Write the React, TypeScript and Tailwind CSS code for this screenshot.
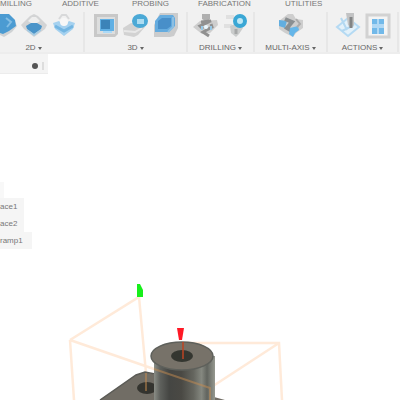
import type { ReactNode } from "react";

const Icon = ({ children }: { children: ReactNode }) => (
  <svg viewBox="0 0 28 28" className="h-7 w-7" aria-hidden="true">
    {children}
  </svg>
);

const AdaptiveIcon = () => (
  <Icon>
    <path d="M1 12 12 2l12 5 3 7-5 6-8 5-12-6z" fill="#cfd2d4" />
    <path d="M1 8 9 2h10l6 6 1 6-7 5-6 3-12-4z" fill="#4b9bd2" />
    <path d="m16 6 5 4-4 5" fill="none" stroke="#82bde4" strokeWidth="2" />
  </Icon>
);

const PocketIcon = () => (
  <Icon>
    <path d="m1 13 9-9 4-2 4 2 9 9-2 4-11 8-10-8z" fill="#d3d4d5" />
    <path d="m8 9 4-4h4l4 4-6 4z" fill="#eeeeee" />
    <path d="m6 14 5-3h6l5 3-1 3-7 5-7-5z" fill="#4a94c9" />
    <path d="m7 18 7 5 7-5" fill="none" stroke="#a3cce6" strokeWidth="1.5" />
  </Icon>
);

const FaceIcon = () => (
  <Icon>
    <path d="m9 7 3-4h4l3 4" fill="none" stroke="#d8d9da" strokeWidth="2" />
    <path d="m3 11 6-2 5 5 5-5 6 2-2 6-9 7-9-7z" fill="#a5d1ef" />
    <path d="m5 14 9 5 9-5" fill="none" stroke="#74b6e2" strokeWidth="3" />
    <circle cx="14" cy="10" r="4" fill="#f7f7f7" />
  </Icon>
);

const ClearingIcon = () => (
  <Icon>
    <path d="M2 2h24v20l-3 3H2z" fill="#c8c8c8" />
    <path d="M5 5h18v17H5z" fill="#dddede" />
    <path d="M8 7h14v12H8z" fill="#61b0e4" />
    <path d="M9 8h9v9H9z" fill="#3b83b8" />
    <path d="M11 19h9v2h-9z" fill="#acdaf7" />
  </Icon>
);

const ParallelIcon = () => (
  <Icon>
    <path d="m1 16 8-5 14 4-7 8-4 2-10-2z" fill="#d2d2d2" />
    <path d="m2 19 11 1 7-4" fill="none" stroke="#e8e8e8" strokeWidth="2" />
    <ellipse cx="18" cy="9" rx="8" ry="7" fill="#4ba9d6" />
    <path d="M15 7h7v5h-7z" fill="#addcf1" />
  </Icon>
);

const ContourIcon = () => (
  <Icon>
    <path d="M8 1h18v15l-4 8-4 1H2V13z" fill="#cbcccd" />
    <path d="m3 9 5-6h13l2 3v8l-6 6H3z" fill="#65acdf" />
    <path d="m6 9 4-3h9v8l-4 3H6z" fill="#488fc9" />
    <path d="M21 5v10l-5 5" fill="none" stroke="#8dbfe2" strokeWidth="2" />
  </Icon>
);

const DrillIcon = () => (
  <Icon>
    <path d="m1 15 7-6 17-1 1 5-8 8-8 1z" fill="#cecece" />
    <path d="M10 2h8v5l-3 3-5-3z" fill="#b0b0b0" />
    <path d="m9 10 10-1-11 5 3 3m8-5 1 3-9 5 6 4" fill="none" stroke="#909090" strokeWidth="3" />
    <circle cx="14" cy="15" r="2" fill="#e9f7ff" />
    <path d="M10 14v4m9-4v4" stroke="#97c9e7" strokeWidth="2" />
  </Icon>
);

const HoleIcon = () => (
  <Icon>
    <path d="M4 3h8v4H4zM2 12h8v4H2z" fill="#e0e0e0" />
    <path d="m8 14 5-2 8 4-4 6-3 3-5-4z" fill="#cacccc" />
    <path d="M14 17v5" stroke="#a6a8a8" strokeWidth="3" />
    <circle cx="18" cy="9" r="5" fill="#bfe8f5" stroke="#3aa7d5" strokeWidth="4" />
  </Icon>
);

const MultiAxisIcon = () => (
  <Icon>
    <path d="M2 9 11 2h5l3 5 7 1v8l-7 5-3 4-8-4-6-4z" fill="#cecece" />
    <path d="m2 8 8 1-2 7-6-2z" fill="#62aee0" />
    <path d="m8 7 7 3-5 6 5 3" fill="none" stroke="#8a8f92" strokeWidth="4" />
    <path d="m13 16 8-2 1 4-4 3-2 4-4-3z" fill="#65b6e9" />
    <path d="m19 7 4 5-3 3" fill="none" stroke="#aaaaaa" strokeWidth="2" />
  </Icon>
);

const ToolpathIcon = () => (
  <Icon>
    <path d="m3 15 11-9 11 9-11 9z" fill="#e3f1fa" stroke="#b5daf3" strokeWidth="2" />
    <path d="m7 6 6 12M8 19l12-6" stroke="#b3d8f1" strokeWidth="2" />
    <path d="M12 1h8v12l-3 3-3-3z" fill="#c2c3c4" />
    <path d="M17 5v11" stroke="#828485" strokeWidth="3" />
  </Icon>
);

const SheetIcon = () => (
  <Icon>
    <path d="M3 3h22v22H3z" fill="#f4f4f4" stroke="#d2d2d2" strokeWidth="3" />
    <path d="M8 7h12v15H8z" fill="#72b9e9" />
    <path d="M13 7h2v15h-2zM8 12h12v4H8z" fill="#b0d8f4" />
  </Icon>
);

type Tool = { name: string; icon: ReactNode };

const Group = ({ label, tools, className }: { label: string; tools: Tool[]; className: string }) => (
  <section className={`flex shrink-0 flex-col items-center border-r-2 border-[#e7e7e7] ${className}`}>
    <div className="flex h-7 justify-center gap-0.5">
      {tools.map((tool) => (
        <button key={tool.name} type="button" aria-label={tool.name} className="h-7 w-7 shrink-0">
          {tool.icon}
        </button>
      ))}
    </div>
    <button type="button" className="mt-1 flex h-2 items-center gap-0.5 text-[8px] leading-2 whitespace-nowrap text-[#666666]">
      {label}
      <svg viewBox="0 0 4 3" className="h-[3px] w-1" aria-hidden="true">
        <path d="M0 0h4L2 3z" fill="currentColor" />
      </svg>
    </button>
  </section>
);

const Part = () => (
  <svg viewBox="0 0 240 120" className="mt-auto ml-15 block w-60 shrink-0" role="img" aria-label="Part and stock outline">
    <defs>
      <linearGradient id="barrel">
        <stop offset="0" stopColor="#8a8d86" />
        <stop offset="0.1" stopColor="#5f615d" />
        <stop offset="0.25" stopColor="#454643" />
        <stop offset="0.45" stopColor="#4a4944" />
        <stop offset="0.65" stopColor="#65665f" />
        <stop offset="0.78" stopColor="#858880" />
        <stop offset="0.87" stopColor="#61645e" />
        <stop offset="1" stopColor="#969990" />
      </linearGradient>
    </defs>
    <path d="m10 60 69-43 7 76M10 60l4 60M10 60l84 29m29-26h96l3 57m-3-57-69 45" fill="none" stroke="#ffa050" strokeOpacity="0.22" strokeWidth="2.5" />
    <path d="m40 120 36-25 9-3 12 3 57 22 11 3z" fill="#716d65" />
    <path d="m40 120 36-25 9-3 10 2" fill="none" stroke="#5b5b56" strokeWidth="1.5" />
    <ellipse cx="87" cy="108" rx="10" ry="6" fill="#34342f" />
    <path d="M94 76h61v44H94z" fill="url(#barrel)" />
    <ellipse cx="122" cy="76" rx="31" ry="14" fill="#777269" stroke="#5e605b" strokeWidth="1.5" />
    <ellipse cx="122" cy="76" rx="11" ry="6" fill="#343630" />
    <path d="m86 93v18M94 89l56 19v12" fill="none" stroke="#c58b50" strokeOpacity="0.5" strokeWidth="2" />
    <path d="M123 62v17" stroke="#bd4423" strokeWidth="1.5" />
    <path d="M77 4h3l3 6v7h-6z" fill="#17ef1b" />
    <path d="M117 48h7l-2 12h-3z" fill="#ff1825" />
  </svg>
);

export default function App() {
  return (
    <main className="flex min-h-screen flex-col overflow-hidden bg-white font-['Liberation_Sans',sans-serif]">
      <header className="h-[54px] shrink-0 overflow-hidden border-b-2 border-[#ededed] bg-[#f1f1f1]">
        <nav className="flex h-3 items-start text-[8px] leading-2 text-[#777777]">
          <a href="#milling" className="w-[62px] shrink-0">MILLING</a>
          <a href="#additive" className="w-[70px] shrink-0">ADDITIVE</a>
          <a href="#probing" className="w-[66px] shrink-0">PROBING</a>
          <a href="#fabrication" className="w-[87px] shrink-0">FABRICATION</a>
          <a href="#utilities" className="shrink-0">UTILITIES</a>
        </nav>
        <div className="flex">
          <Group
            label="2D"
            className="-ml-4 w-[101px]"
            tools={[
              { name: "2D Adaptive Clearing", icon: <AdaptiveIcon /> },
              { name: "2D Pocket", icon: <PocketIcon /> },
              { name: "Face", icon: <FaceIcon /> },
            ]}
          />
          <Group
            label="3D"
            className="w-[103px]"
            tools={[
              { name: "Adaptive Clearing", icon: <ClearingIcon /> },
              { name: "Parallel", icon: <ParallelIcon /> },
              { name: "Contour", icon: <ContourIcon /> },
            ]}
          />
          <Group
            label="DRILLING"
            className="w-[67px]"
            tools={[
              { name: "Drill", icon: <DrillIcon /> },
              { name: "Hole Recognition", icon: <HoleIcon /> },
            ]}
          />
          <Group label="MULTI-AXIS" className="w-[73px]" tools={[{ name: "Multi-Axis", icon: <MultiAxisIcon /> }]} />
          <Group
            label="ACTIONS"
            className="w-[71px]"
            tools={[
              { name: "Generate Toolpath", icon: <ToolpathIcon /> },
              { name: "Setup Sheet", icon: <SheetIcon /> },
            ]}
          />
        </div>
      </header>

      <aside className="w-12">
        <div className="flex h-5 items-center justify-end gap-1 border-b border-[#ececec] bg-[#f4f4f4] pt-1 pr-1">
          <button type="button" aria-label="Browser options" className="h-1.5 w-1.5 rounded-full bg-[#555555]" />
          <span className="h-2 w-0.5 bg-[#dddddd]" />
        </div>
      </aside>
      <ul className="mt-27 text-[8px] leading-2 text-[#777777]">
        <li className="h-4 w-1 bg-[#f8f8f8]" />
        <li className="flex h-[17px] w-6 items-center bg-[#f5f5f5]">ace1</li>
        <li className="flex h-[17px] w-6 items-center bg-[#f5f5f5]">ace2</li>
        <li className="flex h-[17px] w-8 items-center bg-[#f5f5f5]">ramp1</li>
      </ul>

      <Part />
    </main>
  );
}
